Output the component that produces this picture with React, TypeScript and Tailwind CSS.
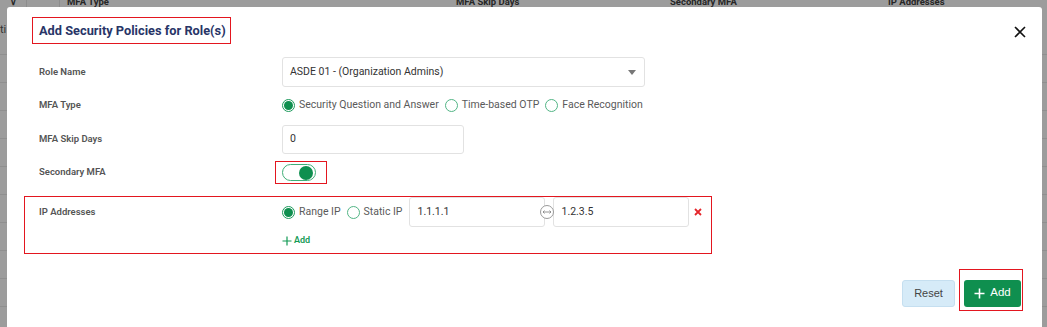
import { useState } from 'react'

function Radio({ checked, label }: { checked?: boolean; label: string }) {
  return (
    <label className="flex cursor-pointer items-center gap-[4px] whitespace-nowrap">
      <span
        className={`flex h-[13px] w-[13px] items-center justify-center rounded-full border ${
          checked ? 'border-[#1d9a5c]' : 'border-[#52b585]'
        } bg-white`}
      >
        {checked && <span className="h-[9px] w-[9px] rounded-full bg-[#0f8f4f]" />}
      </span>
      <span className="text-[10.5px] text-[#5a5a5a]">{label}</span>
    </label>
  )
}

function Row({ label, children, className = '' }: { label: string; children: React.ReactNode; className?: string }) {
  return (
    <div className={`flex items-center px-[15px] ${className}`}>
      <div className="w-[243px] shrink-0 whitespace-nowrap text-[9.5px] font-semibold text-[#555]">{label}</div>
      <div className="flex-1">{children}</div>
    </div>
  )
}

export default function App() {
  const [secondary, setSecondary] = useState(true)

  const cols = ['MFA Type', 'MFA Skip Days', 'Secondary MFA', 'IP Addresses']

  return (
    <div className="relative h-[327px] w-[1047px] overflow-hidden bg-[#9c9c9c] font-['Roboto',sans-serif]">
      {/* page behind the overlay */}
      <div className="-mt-[2px]">
        <div className="flex h-[9px] items-center text-[9.5px] font-bold text-[#262626]">
          <div className="flex h-full w-[27px] items-center justify-center border-r border-[#8d8d8d] text-[9px]">∨</div>
          <div className="h-full w-[33px] border-r border-[#8d8d8d]" />
          <div className="w-[396px] pl-[7px]">{cols[0]}</div>
          <div className="w-[214px]">{cols[1]}</div>
          <div className="w-[218px]">{cols[2]}</div>
          <div>{cols[3]}</div>
        </div>
        <div className="flex h-[48px] items-center border-b border-[#8f8f8f] text-[11px] text-[#333]">
          <span>ti</span>
        </div>
        {Array.from({ length: 10 }).map((_, i) => (
          <div key={i} className="h-[28px] border-b border-[#8f8f8f]" />
        ))}
      </div>

      {/* modal */}
      <div className="absolute left-[7px] top-[7px] h-[340px] w-[1035px] rounded-[3px] bg-white">
        <div className="flex items-start justify-between pl-[25px] pr-[16px] pt-[10px]">
          <div className="flex h-[27px] w-[199px] items-center border-[1.5px] border-[#e3161f] pl-[6px]">
            <h2 className="whitespace-nowrap text-[12.8px] font-bold text-[#283567]">Add Security Policies for Role(s)</h2>
          </div>
          <button type="button" className="mt-[9px] text-[#111]" aria-label="Close">
            <svg width="12" height="12" viewBox="0 0 12 12" fill="none" stroke="currentColor" strokeWidth={1.6}>
              <path d="M1 1l10 10M11 1L1 11" />
            </svg>
          </button>
        </div>

        <div className="mt-[13px] pl-[17px]">
          <Row label="Role Name" className="h-[30px]">
            <div className="flex h-[30px] w-[363px] items-center justify-between rounded-[3px] border border-[#e2e2e2] pl-[7px] pr-[8px]">
              <span className="text-[10.5px] text-[#333]">ASDE 01 - (Organization Admins)</span>
              <svg width="8" height="5" viewBox="0 0 8 5">
                <path d="M0 0h8L4 5z" fill="#777" />
              </svg>
            </div>
          </Row>

          <Row label="MFA Type" className="mt-[8px] h-[20px]">
            <div className="flex items-center gap-[6px]">
              <Radio checked label="Security Question and Answer" />
              <Radio label="Time-based OTP" />
              <Radio label="Face Recognition" />
            </div>
          </Row>

          <Row label="MFA Skip Days" className="mt-[10px] h-[28px]">
            <div className="flex h-[29px] w-[182px] items-center rounded-[3px] border border-[#e2e2e2] pl-[7px] text-[10.5px] text-[#333]">
              0
            </div>
          </Row>

          <Row label="Secondary MFA" className="mt-[8px] h-[23px]">
            <div className="-ml-[7px] flex h-[23px] w-[52px] items-center border-[1.5px] border-[#e3161f] pl-[6px]">
              <button
                type="button"
                onClick={() => setSecondary((s) => !s)}
                className={`flex h-[17px] w-[34px] items-center rounded-full border border-[#3fae77] bg-white px-[2px] ${
                  secondary ? 'justify-end' : 'justify-start'
                }`}
              >
                <span className="h-[14px] w-[14px] rounded-full bg-[#0f8f4f]" />
              </button>
            </div>
          </Row>

          <div className="mt-[12px] flex w-[688px] border-[1.5px] border-[#e3161f] px-[14px]">
            <div className="w-[243px] shrink-0 pt-[8px] text-[9.5px] font-semibold text-[#555]">IP Addresses</div>
            <div className="flex-1">
              <div className="flex items-center">
                <div className="flex items-center gap-[6px]">
                  <Radio checked label="Range IP" />
                  <Radio label="Static IP" />
                </div>
                <div className="relative ml-[7px] flex items-center gap-[8px]">
                  <div className="flex h-[30px] w-[136px] items-center rounded-[3px] border border-[#e2e2e2] pl-[7px] text-[10.5px] text-[#333]">
                    1.1.1.1
                  </div>
                  <div className="flex h-[30px] w-[136px] items-center rounded-[3px] border border-[#e2e2e2] pl-[7px] text-[10.5px] text-[#333]">
                    1.2.3.5
                  </div>
                  <span className="absolute left-[131px] top-[8px] flex h-[14px] w-[14px] items-center justify-center rounded-full border border-[#9a9a9a] bg-white">
                    <svg width="10" height="6" viewBox="0 0 10 6" fill="none" stroke="#888" strokeWidth={0.9}>
                      <path d="M1 3h8M2.5 1.5L1 3l1.5 1.5M7.5 1.5L9 3 7.5 4.5" />
                    </svg>
                  </span>
                </div>
                <svg className="ml-[5px]" width="8" height="8" viewBox="0 0 8 8" fill="none" stroke="#e4262b" strokeWidth={1.8}>
                  <path d="M1 1l6 6M7 1L1 7" />
                </svg>
              </div>
              <button type="button" className="mb-[5px] mt-[7px] flex items-center gap-[2px] text-[9px] font-semibold text-[#139a55]">
                <svg width="10" height="10" viewBox="0 0 10 10" fill="none" stroke="currentColor" strokeWidth={1.2}>
                  <path d="M5 0.5v9M0.5 5h9" />
                </svg>
                Add
              </button>
            </div>
          </div>
        </div>

        <div className="mt-[15px] flex items-end justify-end pr-[19px]">
          <button
            type="button"
            className="mb-[4px] h-[27px] w-[53px] rounded-[3px] border border-[#c5dff0] bg-[#d6ebf8] font-['Liberation_Sans',sans-serif] text-[11px] text-[#444]"
          >
            Reset
          </button>
          <div className="ml-[4px] border-[1.5px] border-[#e3161f] pb-[3px] pl-[4px] pr-[1px] pt-[10px]">
            <button
              type="button"
              className="flex h-[27px] w-[57px] items-center justify-center gap-[5px] rounded-[3px] bg-[#0f8f4f] font-['Liberation_Sans',sans-serif] text-[11.5px] text-white"
            >
              <svg width="11" height="11" viewBox="0 0 11 11" fill="none" stroke="currentColor" strokeWidth={1.6}>
                <path d="M5.5 0.5v10M0.5 5.5h10" />
              </svg>
              Add
            </button>
          </div>
        </div>
      </div>
    </div>
  )
}
